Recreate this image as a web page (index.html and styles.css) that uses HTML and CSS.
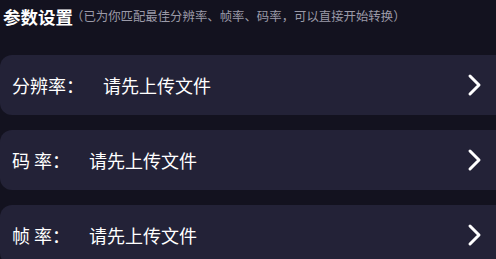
FILE: index.html
```html
<!DOCTYPE html>
<html lang="zh">
<head>
<meta charset="utf-8">
<link rel="stylesheet" href="styles.css">
</head>
<body>
<div class="page">
  <div class="header">
    <span class="title">参数设置</span>
    <span class="hint">（已为你匹配最佳分辨率、帧率、码率，可以直接开始转换）</span>
  </div>
  <div class="list">
    <div class="row">
      <span class="label label-wide">分辨率：</span>
      <span class="value">请先上传文件</span>
      <svg class="chev" viewBox="0 0 16 24" width="16" height="24"><path d="M3 3 L12 12 L3 21" fill="none" stroke="#fff" stroke-width="3" stroke-linecap="round" stroke-linejoin="round"/></svg>
    </div>
    <div class="row">
      <span class="label">码 率：</span>
      <span class="value">请先上传文件</span>
      <svg class="chev" viewBox="0 0 16 24" width="16" height="24"><path d="M3 3 L12 12 L3 21" fill="none" stroke="#fff" stroke-width="3" stroke-linecap="round" stroke-linejoin="round"/></svg>
    </div>
    <div class="row">
      <span class="label">帧 率：</span>
      <span class="value">请先上传文件</span>
      <svg class="chev" viewBox="0 0 16 24" width="16" height="24"><path d="M3 3 L12 12 L3 21" fill="none" stroke="#fff" stroke-width="3" stroke-linecap="round" stroke-linejoin="round"/></svg>
    </div>
  </div>
</div>
</body>
</html>
```
FILE: styles.css
```css
html, body {
  margin: 0;
  padding: 0;
  background: #13121f;
}
.page {
  width: 496px;
  height: 259px;
  overflow: hidden;
  font-family: "Noto Sans CJK SC", "Noto Sans", sans-serif;
  color: #ffffff;
}
.header {
  display: flex;
  align-items: center;
  height: 33px;
  padding-left: 3px;
}
.title {
  font-size: 17.5px;
  font-weight: 700;
  line-height: 33px;
}
.hint {
  font-size: 12.4px;
  color: #9b9aa8;
  margin-left: -2px;
  line-height: 33px;
}
.list {
  display: flex;
  flex-direction: column;
  gap: 15px;
  margin-top: 22px;
}
.row {
  display: flex;
  align-items: center;
  height: 60px;
  background: #232237;
  border-radius: 12px 0 0 12px;
  padding-left: 12px;
  padding-right: 13px;
}
.label {
  font-size: 18px;
  width: 77px;
  white-space: pre;
}
.label-wide {
  width: 91px;
}
.value {
  font-size: 18px;
  flex: 1;
}
.chev {
  display: block;
}
```
